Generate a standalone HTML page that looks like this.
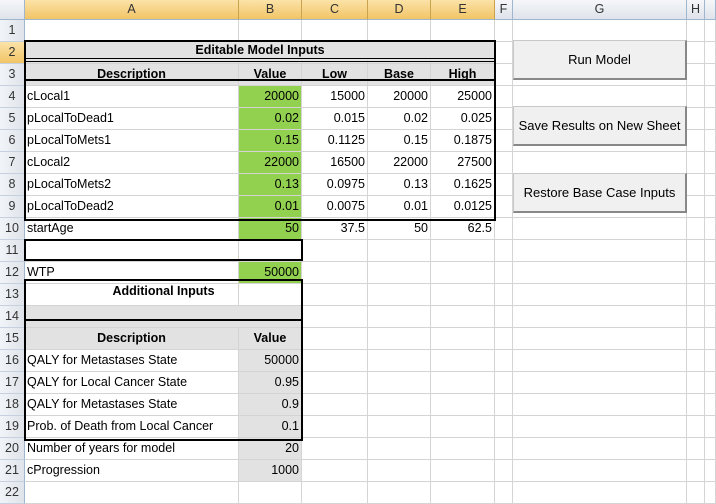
<!DOCTYPE html>
<html><head><meta charset="utf-8"><style>
body{margin:0;width:716px;height:455px;overflow:hidden;background:#fff;font-family:"Liberation Sans",Arial,sans-serif;font-size:12.5px;color:#000;position:relative}
table{position:absolute;left:0;top:0;border-collapse:separate;border-spacing:0;table-layout:fixed}
td{height:20px;box-sizing:border-box;border-right:1px solid #d4d4d4;border-bottom:1px solid #d4d4d4;padding:0 2px;white-space:nowrap;overflow:hidden;line-height:21px}
tr.h td{background:linear-gradient(#f5f7fa,#dfe4ea);border-right:1px solid #9eb6ce;border-bottom:1px solid #9eb6ce;text-align:center;color:#333;line-height:19px}
tr.h td.o{background:linear-gradient(#fbe3a8,#f2c466);border-right-color:#c9a34d}
td.r{background:linear-gradient(90deg,#f1f4f8,#dfe4ea);border-right:1px solid #9eb6ce;border-bottom:1px solid #c5d1de;text-align:center;color:#333;padding:0}
td.ro{background:linear-gradient(#fbe3a8,#f2c466)}
.n{text-align:right}.c{text-align:center;font-weight:bold}
.g{background:#92d050}.gr{background:#e2e2e2}
.bx{position:absolute;border:2px solid #000;box-sizing:border-box}
.ln{position:absolute;height:2px;background:#000}
.btn{position:absolute;left:513px;width:174px;height:40px;box-sizing:border-box;background:#f0f0f0;border:1px solid #c8c8c8;border-right:2px solid #888;border-bottom:2px solid #888;text-align:center;line-height:37px;font-size:13px}
</style></head><body>
<table>
<colgroup><col style="width:25px"><col style="width:214px"><col style="width:63px"><col style="width:66px"><col style="width:63px"><col style="width:64px"><col style="width:18px"><col style="width:174px"><col style="width:18px"><col style="width:11px"></colgroup>
<tr class="h"><td></td><td class="o">A</td><td class="o">B</td><td class="o">C</td><td class="o">D</td><td class="o">E</td><td>F</td><td>G</td><td>H</td><td></td></tr>
<tr><td class="r">1</td><td></td><td></td><td></td><td></td><td></td><td></td><td></td><td></td><td></td></tr>
<tr><td class="r ro">2</td><td class="gr"></td><td class="gr"></td><td class="gr"></td><td class="gr"></td><td class="gr"></td><td></td><td></td><td></td><td></td></tr>
<tr><td class="r">3</td><td class="c gr">Description</td><td class="c gr">Value</td><td class="c gr">Low</td><td class="c gr">Base</td><td class="c gr">High</td><td></td><td></td><td></td><td></td></tr>
<tr><td class="r">4</td><td>cLocal1</td><td class="n g">20000</td><td class="n">15000</td><td class="n">20000</td><td class="n">25000</td><td></td><td></td><td></td><td></td></tr>
<tr><td class="r">5</td><td>pLocalToDead1</td><td class="n g">0.02</td><td class="n">0.015</td><td class="n">0.02</td><td class="n">0.025</td><td></td><td></td><td></td><td></td></tr>
<tr><td class="r">6</td><td>pLocalToMets1</td><td class="n g">0.15</td><td class="n">0.1125</td><td class="n">0.15</td><td class="n">0.1875</td><td></td><td></td><td></td><td></td></tr>
<tr><td class="r">7</td><td>cLocal2</td><td class="n g">22000</td><td class="n">16500</td><td class="n">22000</td><td class="n">27500</td><td></td><td></td><td></td><td></td></tr>
<tr><td class="r">8</td><td>pLocalToMets2</td><td class="n g">0.13</td><td class="n">0.0975</td><td class="n">0.13</td><td class="n">0.1625</td><td></td><td></td><td></td><td></td></tr>
<tr><td class="r">9</td><td>pLocalToDead2</td><td class="n g">0.01</td><td class="n">0.0075</td><td class="n">0.01</td><td class="n">0.0125</td><td></td><td></td><td></td><td></td></tr>
<tr><td class="r">10</td><td>startAge</td><td class="n g">50</td><td class="n">37.5</td><td class="n">50</td><td class="n">62.5</td><td></td><td></td><td></td><td></td></tr>
<tr><td class="r">11</td><td></td><td></td><td></td><td></td><td></td><td></td><td></td><td></td><td></td></tr>
<tr><td class="r">12</td><td>WTP</td><td class="n g">50000</td><td></td><td></td><td></td><td></td><td></td><td></td><td></td></tr>
<tr><td class="r">13</td><td></td><td></td><td></td><td></td><td></td><td></td><td></td><td></td><td></td></tr>
<tr><td class="r">14</td><td class="gr" style="border-right:none"></td><td class="gr"></td><td></td><td></td><td></td><td></td><td></td><td></td><td></td></tr>
<tr><td class="r">15</td><td class="c gr">Description</td><td class="c gr">Value</td><td></td><td></td><td></td><td></td><td></td><td></td><td></td></tr>
<tr><td class="r">16</td><td>QALY for Metastases State</td><td class="n gr">50000</td><td></td><td></td><td></td><td></td><td></td><td></td><td></td></tr>
<tr><td class="r">17</td><td>QALY for Local Cancer State</td><td class="n gr">0.95</td><td></td><td></td><td></td><td></td><td></td><td></td><td></td></tr>
<tr><td class="r">18</td><td>QALY for Metastases State</td><td class="n gr">0.9</td><td></td><td></td><td></td><td></td><td></td><td></td><td></td></tr>
<tr><td class="r">19</td><td>Prob. of Death from Local Cancer</td><td class="n gr">0.1</td><td></td><td></td><td></td><td></td><td></td><td></td><td></td></tr>
<tr><td class="r">20</td><td>Number of years for model</td><td class="n gr">20</td><td></td><td></td><td></td><td></td><td></td><td></td><td></td></tr>
<tr><td class="r">21</td><td>cProgression</td><td class="n gr">1000</td><td></td><td></td><td></td><td></td><td></td><td></td><td></td></tr>
<tr><td class="r">22</td><td></td><td></td><td></td><td></td><td></td><td></td><td></td><td></td><td></td></tr>
</table>
<div style="position:absolute;left:25px;top:41px;width:470px;height:19px;line-height:19px;text-align:center;font-weight:bold;background:#e2e2e2">Editable Model Inputs</div>
<div style="position:absolute;left:25px;top:281px;width:277px;height:19px;line-height:21px;text-align:center;font-weight:bold">Additional Inputs</div>
<div class="bx" style="left:24px;top:40px;width:472px;height:181px"></div>
<div class="ln" style="left:24px;top:58px;width:472px;height:1px"></div>
<div class="ln" style="left:24px;top:61px;width:472px;height:1px"></div>
<div class="ln" style="left:24px;top:79px;width:472px"></div>
<div class="bx" style="left:24px;top:239px;width:279px;height:22px"></div>
<div class="bx" style="left:24px;top:279px;width:279px;height:162px"></div>
<div class="ln" style="left:24px;top:319px;width:279px"></div>
<div class="btn" style="top:40px">Run Model</div>
<div class="btn" style="top:106px">Save Results on New Sheet</div>
<div class="btn" style="top:173px">Restore Base Case Inputs</div>
</body></html>
